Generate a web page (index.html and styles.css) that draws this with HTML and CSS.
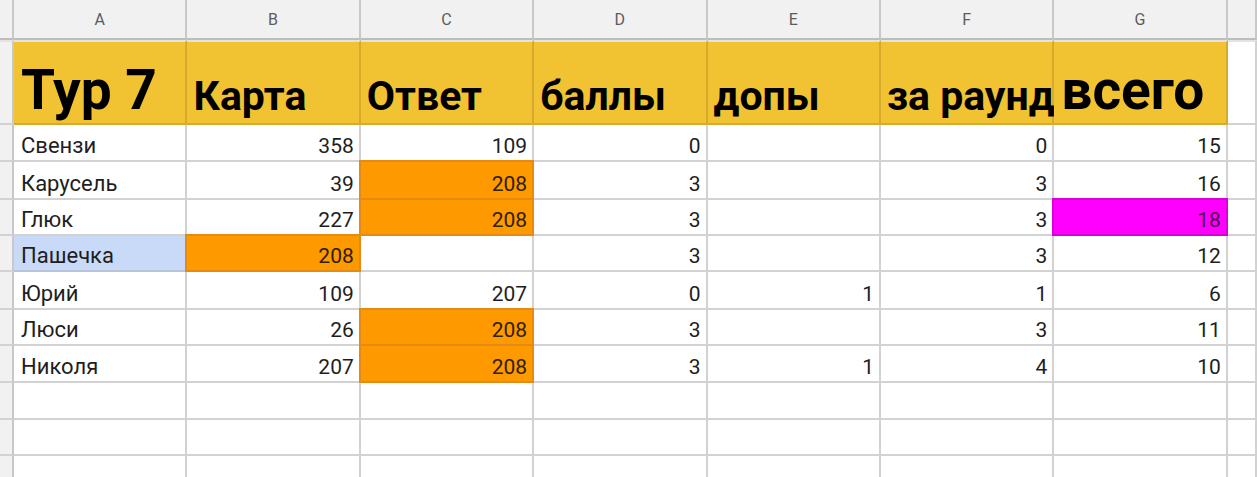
FILE: index.html
```html
<!DOCTYPE html>
<html lang="ru">
<head>
<meta charset="utf-8">
<link rel="stylesheet" href="styles.css">
</head>
<body>
<div class="sheet">
  <div class="c hd rh"></div>
  <div class="c hd">A</div><div class="c hd">B</div><div class="c hd">C</div><div class="c hd">D</div><div class="c hd">E</div><div class="c hd">F</div><div class="c hd">G</div><div class="c hd"></div>

  <div class="c rh r1"></div>
  <div class="c y r1 big">Тур 7</div>
  <div class="c y r1 mid">Карта</div>
  <div class="c y r1 mid">Ответ</div>
  <div class="c y r1 mid">баллы</div>
  <div class="c y r1 mid">допы</div>
  <div class="c y r1 mid">за раунд</div>
  <div class="c y r1 big">всего</div>
  <div class="c r1 blank"></div>

  <div class="c rh"></div><div class="c t">Свензи</div><div class="c n">358</div><div class="c n">109</div><div class="c n">0</div><div class="c n"></div><div class="c n">0</div><div class="c n">15</div><div class="c"></div>
  <div class="c rh"></div><div class="c t">Карусель</div><div class="c n">39</div><div class="c n o">208</div><div class="c n">3</div><div class="c n"></div><div class="c n">3</div><div class="c n">16</div><div class="c"></div>
  <div class="c rh"></div><div class="c t">Глюк</div><div class="c n">227</div><div class="c n o">208</div><div class="c n">3</div><div class="c n"></div><div class="c n">3</div><div class="c n m">18</div><div class="c"></div>
  <div class="c rh"></div><div class="c t b">Пашечка</div><div class="c n o">208</div><div class="c n"></div><div class="c n">3</div><div class="c n"></div><div class="c n">3</div><div class="c n">12</div><div class="c"></div>
  <div class="c rh"></div><div class="c t">Юрий</div><div class="c n">109</div><div class="c n">207</div><div class="c n">0</div><div class="c n">1</div><div class="c n">1</div><div class="c n">6</div><div class="c"></div>
  <div class="c rh"></div><div class="c t">Люси</div><div class="c n">26</div><div class="c n o">208</div><div class="c n">3</div><div class="c n"></div><div class="c n">3</div><div class="c n">11</div><div class="c"></div>
  <div class="c rh"></div><div class="c t">Николя</div><div class="c n">207</div><div class="c n o">208</div><div class="c n">3</div><div class="c n">1</div><div class="c n">4</div><div class="c n">10</div><div class="c"></div>

  <div class="c rh"></div><div class="c"></div><div class="c"></div><div class="c"></div><div class="c"></div><div class="c"></div><div class="c"></div><div class="c"></div><div class="c"></div>
  <div class="c rh"></div><div class="c"></div><div class="c"></div><div class="c"></div><div class="c"></div><div class="c"></div><div class="c"></div><div class="c"></div><div class="c"></div>
  <div class="c rh"></div><div class="c"></div><div class="c"></div><div class="c"></div><div class="c"></div><div class="c"></div><div class="c"></div><div class="c"></div><div class="c"></div>
</div>
</body>
</html>
```

FILE: styles.css
```css
html, body {
  margin: 0;
  padding: 0;
  background: #ffffff;
}
body {
  width: 1257px;
  height: 477px;
  overflow: hidden;
  font-family: Roboto, "Liberation Sans", Arial, sans-serif;
  color: #1e1e1e;
}
.sheet {
  display: grid;
  grid-template-columns: 14px repeat(7, 173.4px) 1fr;
  grid-template-rows: 40px 85px 37px 38px 36px 36px 38px 36px 37px 37px 36px 40px;
  width: 1257px;
}
.c {
  box-sizing: border-box;
  border-right: 2px solid #d2d2d2;
  border-bottom: 2px solid #d2d2d2;
  display: flex;
  align-items: flex-end;
  white-space: nowrap;
  min-width: 0;
  font-size: 21px;
  line-height: 1;
}
.hd {
  background: #f1f1f1;
  border-right-color: #c8c8c8;
  border-bottom-color: #bdbdbd;
  justify-content: center;
  align-items: center;
  font-size: 16px;
  color: #5c5c5c;
  padding-top: 2px;
}
.rh {
  background: #f1f1f1;
  border-right-color: #c8c8c8;
}
.r1 {
  border-top: 2px solid #e3e3e3;
}
.y {
  background: #f1c232;
  border-right-color: #d6aa2c;
  border-bottom-color: #d6aa2c;
  font-weight: bold;
  color: #000000;
  padding-left: 6px;
  overflow: visible;
}
.big {
  font-size: 55px;
  padding-bottom: 5px;
  padding-left: 7px;
}
.mid {
  font-size: 41px;
  padding-bottom: 6px;
}
.t {
  font-size: 22px;
  padding: 0 0 3px 7px;
}
.n {
  justify-content: flex-end;
  padding: 0 5px 3px 0;
}
.o, .m {
  margin: -2px 0 0 -2px;
  border-left: 2px solid;
  border-top: 2px solid;
}
.o {
  background: #ff9900;
  border-color: #e38b14;
  color: #2e2000;
}
.m {
  background: #ff00ff;
  border-color: #d600d6;
  color: #4a0a4a;
}
.b {
  background: #c9daf8;
  border-right-color: #b3bccb;
  border-bottom-color: #b8c4d8;
}
```
